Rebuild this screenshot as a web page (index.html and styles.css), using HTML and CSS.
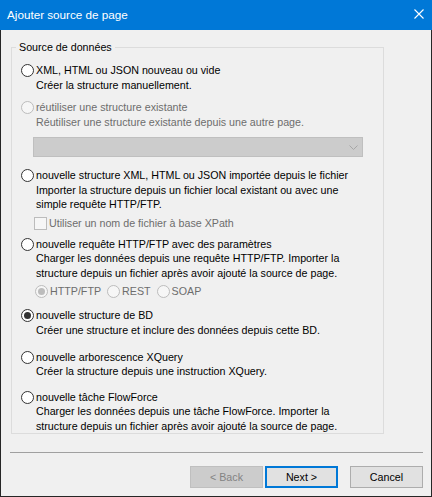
FILE: index.html
```html
<!DOCTYPE html>
<html lang="fr">
<head>
    <meta charset="UTF-8">
    <title>Ajouter source de page</title>
    <link rel="stylesheet" href="styles.css">
</head>
<body>

    <div class="window">
        <div class="titlebar">
            <span class="title">Ajouter source de page</span>
            <svg class="close" width="10" height="10" viewBox="0 0 10 10">
                <path d="M0.5 0.5 L9.5 9.5 M9.5 0.5 L0.5 9.5" stroke="#fff" stroke-width="1.1" fill="none"/>
            </svg>
        </div>

        <div class="content">
            <fieldset class="group">
                <legend>Source de données</legend>

                <div class="options">
                    <div class="option opt-1">
                        <span class="radio"></span>
                        <div class="text">
                            XML, HTML ou JSON nouveau ou vide<br>
                            Créer la structure manuellement.
                        </div>
                    </div>

                    <div class="option opt-2 disabled">
                        <span class="radio"></span>
                        <div class="text">
                            réutiliser une structure existante<br>
                            Réutiliser une structure existante depuis une autre page.
                        </div>
                    </div>

                    <div class="combo">
                        <svg width="9" height="5" viewBox="0 0 9 5">
                            <path d="M0.5 0.5 L4.5 4.5 L8.5 0.5" stroke="#a6a6a6" fill="none"/>
                        </svg>
                    </div>

                    <div class="option opt-3">
                        <span class="radio"></span>
                        <div class="text">
                            nouvelle structure XML, HTML ou JSON importée depuis le fichier<br>
                            Importer la structure depuis un fichier local existant ou avec une<br>
                            simple requête HTTP/FTP.
                        </div>
                    </div>

                    <div class="check-row disabled">
                        <span class="checkbox"></span>
                        <span class="text">Utiliser un nom de fichier à base XPath</span>
                    </div>

                    <div class="option opt-4">
                        <span class="radio"></span>
                        <div class="text">
                            nouvelle requête HTTP/FTP avec des paramètres<br>
                            Charger les données depuis une requête HTTP/FTP. Importer la<br>
                            structure depuis un fichier après avoir ajouté la source de page.
                        </div>
                    </div>

                    <div class="sub-radios disabled">
                        <span class="sub"><span class="radio checked"></span>HTTP/FTP</span>
                        <span class="sub"><span class="radio"></span>REST</span>
                        <span class="sub"><span class="radio"></span>SOAP</span>
                    </div>

                    <div class="option opt-5">
                        <span class="radio checked"></span>
                        <div class="text">
                            nouvelle structure de BD<br>
                            Créer une structure et inclure des données depuis cette BD.
                        </div>
                    </div>

                    <div class="option opt-6">
                        <span class="radio"></span>
                        <div class="text">
                            nouvelle arborescence XQuery<br>
                            Créer la structure depuis une instruction XQuery.
                        </div>
                    </div>

                    <div class="option opt-7">
                        <span class="radio"></span>
                        <div class="text">
                            nouvelle tâche FlowForce<br>
                            Charger les données depuis une tâche FlowForce. Importer la<br>
                            structure depuis un fichier après avoir ajouté la source de page.
                        </div>
                    </div>
                </div>
            </fieldset>

            <div class="footer">
                <div class="separator"></div>
                <div class="buttons">
                    <button class="btn" disabled>&lt; Back</button>
                    <button class="btn btn-default">Next &gt;</button>
                    <button class="btn btn-cancel">Cancel</button>
                </div>
            </div>
        </div>
    </div>

</body>
</html>
```

FILE: styles.css
```css
body {
    margin: 0;
    font-family: 'Liberation Sans', Arial, sans-serif;
    background-color: #f0f0f0;
}

.window {
    width: 432px;
    height: 497px;
    display: flex;
    flex-direction: column;
    background-color: #f0f0f0;
}

.titlebar {
    height: 30px;
    flex: none;
    background-color: #0078d7;
    color: #fff;
    display: flex;
    align-items: center;
    justify-content: space-between;
    padding: 0 8px 0 7px;
}

.title {
    font-size: 11.7px;
    margin-top: -1px;
}

.close {
    margin-top: -2px;
}

.content {
    flex: 1;
    display: flex;
    flex-direction: column;
    border: 1px solid #262626;
    border-top: none;
    font-size: 10.7px;
    line-height: 14.5px;
    color: #000;
}

.group {
    margin: 10px 0 0 10px;
    width: 373px;
    box-sizing: border-box;
    padding: 0 0 0 4px;
    border: 1px solid #dcdcdc;
    min-width: 0;
}

.group legend {
    padding: 0 3px;
    line-height: 14px;
}

.options {
    padding: 9px 0 0 5px;
    display: flex;
    flex-direction: column;
}

.option {
    display: flex;
    align-items: flex-start;
}

.option .text {
    margin-left: 2px;
}

.radio {
    width: 13px;
    height: 13px;
    box-sizing: border-box;
    border: 1px solid #333;
    border-radius: 50%;
    background-color: #fff;
    flex: none;
    margin-top: 1px;
    position: relative;
}

.radio.checked::after {
    content: "";
    position: absolute;
    left: 2px;
    top: 2px;
    width: 7px;
    height: 7px;
    border-radius: 50%;
    background-color: #333;
}

.disabled {
    color: #6d6d6d;
}

.disabled .radio,
.disabled .checkbox {
    border-color: #bcbcbc;
    background-color: #f6f6f6;
}

.disabled .radio.checked::after {
    background-color: #bcbcbc;
}

.opt-2 { margin-top: 8px; }
.opt-3 { margin-top: 11px; }
.opt-4 { margin-top: 6.5px; }
.opt-5 { margin-top: 10px; }
.opt-6 { margin-top: 12.5px; }
.opt-7 { margin-top: 11px; }

.combo {
    margin: 8px 0 0 12px;
    width: 330px;
    height: 20px;
    box-sizing: border-box;
    background-color: #cccccc;
    border: 1px solid #bfbfbf;
    display: flex;
    align-items: center;
    justify-content: flex-end;
    padding-right: 4px;
}

.check-row {
    margin: 4px 0 0 13px;
    display: flex;
    align-items: flex-start;
}

.checkbox {
    width: 13px;
    height: 13px;
    box-sizing: border-box;
    border: 1px solid #333;
    background-color: #fff;
    margin-top: 1px;
    margin-right: 2px;
}

.sub-radios {
    margin: 3.5px 0 0 14px;
    display: flex;
}

.sub {
    display: flex;
    align-items: flex-start;
    margin-right: 6px;
}

.sub .radio {
    margin-right: 2px;
}

.footer {
    margin-top: auto;
    padding-bottom: 8px;
}

.separator {
    margin: 0 8px 0 9px;
    border-top: 1px solid #a0a0a0;
}

.buttons {
    display: flex;
    justify-content: flex-end;
    padding: 13px 8px 0 0;
}

.btn {
    width: 73px;
    height: 22px;
    box-sizing: border-box;
    font-family: 'Liberation Sans', Arial, sans-serif;
    font-size: 10.7px;
    color: #000;
    background-color: #e1e1e1;
    border: 1px solid #adadad;
    padding: 0;
    margin: 0;
}

.btn:disabled {
    background-color: #cccccc;
    border-color: #bfbfbf;
    color: #838383;
}

.btn-default {
    margin-left: 2px;
    border: 2px solid #0078d7;
}

.btn-cancel {
    margin-left: 12px;
}
```
